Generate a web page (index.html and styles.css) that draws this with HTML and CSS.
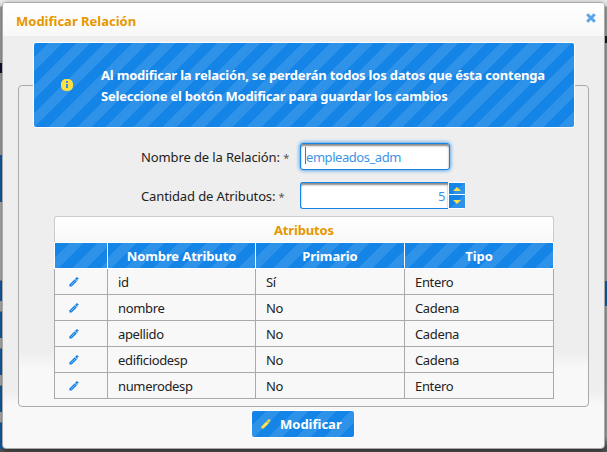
FILE: index.html
```html
<!DOCTYPE html>
<html lang="es">
<head>
<meta charset="utf-8">
<title>Modificar Relación</title>
<link rel="stylesheet" href="styles.css">
</head>
<body>
<svg class="defs" width="0" height="0"><defs>
<symbol id="pencil" viewBox="0 0 10 10"><path d="M.4 9.600V7.400L5.600 2.200L7.800 4.400L2.600 9.600z" fill="currentColor"/><path d="M2 8L6.400 3.600" stroke="#fff" stroke-opacity=".75" stroke-width=".9" stroke-dasharray=".9 .7"/><path d="M6.500 1.500L8.500 3.500M8 0v3M6.500 1.500h3" stroke="currentColor" stroke-width="1.100"/></symbol>
</defs></svg>
<div class="backdrop"><div class="strip left"><i></i><b></b><i></i><b></b><i></i><b></b><i></i><b></b><i></i><b></b><i></i></div><div class="strip right"><b></b></div></div>
<main class="dialog">
  <header class="titlebar"><h1>Modificar Relación</h1>
    <svg class="close" width="10" height="10" viewBox="0 0 10 10"><path d="M1.200 1.200L8.800 8.800M8.800 1.200L1.200 8.800" stroke="currentColor" stroke-width="3"/></svg>
  </header>
  <section class="panel">
    <div class="notice stripes">
      <svg width="12" height="12" viewBox="0 0 12 12"><rect width="12" height="12" rx="5" fill="#ffdf44"/><path d="M5 2h2v2H5zM5 5h2v4H5z" fill="#2f8fe8"/></svg>
      <div class="message"><p>Al modificar la relación, se perderán todos los datos que ésta contenga</p><p>Seleccione el botón Modificar para guardar los cambios</p></div>
    </div>
    <div class="field"><span class="label">Nombre de la Relación: <em>*</em></span><div class="input focus"><i class="caret"></i><span>empleados_adm</span></div></div>
    <div class="field second"><span class="label">Cantidad de Atributos: <em>*</em></span><div class="input number"><span>5</span></div><div class="spinner"><div class="stripes up"><i></i></div><div class="stripes down"><i></i></div></div></div>
    <div class="caption">Atributos</div>
    <div class="table">
      <div class="row head"><span class="stripes"></span><span class="stripes">Nombre Atributo</span><span class="stripes">Primario</span><span class="stripes">Tipo</span></div>
      <div class="row"><span><svg width="10" height="10"><use href="#pencil"/></svg></span><span>id</span><span>Sí</span><span>Entero</span></div>
      <div class="row"><span><svg width="10" height="10"><use href="#pencil"/></svg></span><span>nombre</span><span>No</span><span>Cadena</span></div>
      <div class="row"><span><svg width="10" height="10"><use href="#pencil"/></svg></span><span>apellido</span><span>No</span><span>Cadena</span></div>
      <div class="row"><span><svg width="10" height="10"><use href="#pencil"/></svg></span><span>edificiodesp</span><span>No</span><span>Cadena</span></div>
      <div class="row"><span><svg width="10" height="10"><use href="#pencil"/></svg></span><span>numerodesp</span><span>No</span><span>Entero</span></div>
    </div>
  </section>
  <button class="button stripes"><svg width="10" height="10"><use href="#pencil"/></svg><span>Modificar</span></button>
</main>
</body>
</html>
```
FILE: styles.css
```css
* { box-sizing: border-box; }
body { margin: 0; width: 607px; height: 452px; overflow: hidden; background: #aaa; font: 13px/20px "Noto Sans", sans-serif; color: #222; }
h1, p { margin: 0; }
.defs, .backdrop { position: absolute; }
.backdrop { inset: 0; background: linear-gradient(#eee 0 6px, #aaa 7px 437px, #555 447px); }
.strip { position: absolute; top: 0; width: 3px; height: 452px; }
.strip.left { left: 0; padding-top: 155px; background: linear-gradient(#0000 63px, #113 63px 73px, #0000 73px); }
.strip.left b { display: block; height: 11px; background: #bbb; border-bottom: 1px solid #888; }
.strip.left i { display: block; height: 26px; background: #1762ad; }
.strip.left i:first-child { height: 47px; }
.strip.left b:nth-child(2) { height: 79px; }
.strip.left i:nth-child(3) { height: 20px; }
.strip.right { right: 0; padding-top: 281px; background: linear-gradient(#0000 36px, #221a11 36px 43px, #0000 43px); }
.strip.right b { display: block; height: 25px; background: #1762ad; }
.dialog { position: relative; margin: 2px 0 0 2px; width: 603px; height: 447px; border: 1px solid #aaa; border-radius: 4px; background: linear-gradient(#eee 387px, #f8f8f8 402px); box-shadow: 0 2px 6px #0008; display: flex; flex-direction: column; }
.titlebar { height: 33px; flex: none; background: linear-gradient(#fff, #f8f8f8); display: flex; justify-content: space-between; padding: 8px 8px 0 13px; border-radius: 3px 3px 0 0; }
.titlebar h1 { color: #e69700; font-size: 13px; line-height: 20px; }
.close { color: #5aa5e7; margin-top: 2px; }
.panel { height: 322px; flex: none; margin: 49px 15px 0 15px; border: 1px solid #aaa; border-radius: 4px; background: linear-gradient(#eee 266px, #f8f8f8 282px); }
.stripes { background: repeating-linear-gradient(135deg, #1484e6 0 10px, #2f92e9 10px 20px); color: #fff; font-weight: bold; }
.notice { width: 542px; height: 86px; margin: -44px 0 0 14px; border: 1px solid #fff; border-radius: 3px; display: flex; align-items: center; padding-left: 27px; }
.message { margin-left: 28px; padding-top: 2px; line-height: 21px; white-space: nowrap; letter-spacing: -.2px; }
.field { display: flex; height: 27px; margin: 15px 0 0 122px; align-items: center; }
.field.second { margin-top: 12px; }
.label { width: 159px; white-space: nowrap; letter-spacing: -.12px; padding-top: 1px; }
.label em { font-style: normal; font-size: 11px; color: #555; }
.input { width: 150px; height: 27px; background: #fff; color: #3c94ea; border: 1px solid #1484e6; border-radius: 3px; padding: 3px 4px; box-shadow: inset 0 2px 2px #888; display: flex; letter-spacing: -.45px; }
.input.focus { box-shadow: inset 0 2px 2px #888, 0 0 4px #1484e6; }
.caret { width: 1px; height: 17px; background: #1484e6; }
.input.number { width: 148px; padding-right: 3px; justify-content: flex-end; border-right: 0; border-radius: 3px 0 0 3px; }
.spinner { width: 18px; height: 27px; border: 1px solid #fff; border-radius: 0 3px 3px 0; display: grid; grid-template-rows: 11px 13px; gap: 1px; background: #fff; }
.spinner div { display: grid; place-items: center; }
.spinner i { border: 4px solid transparent; width: 0; }
.spinner .up i { border-bottom-color: #ffdf44; border-top: 0; }
.spinner .down i { border-top-color: #ffdf44; border-bottom: 0; }
.caption { margin: 7px 0 0 35px; width: 500px; height: 26px; background: linear-gradient(#fff, #f8f8f8); border: 1px solid #ccc; border-bottom: 0; border-radius: 3px 3px 0 0; color: #e69700; font-weight: bold; text-align: center; line-height: 27px; letter-spacing: -.15px; }
.table { margin-left: 35px; width: 500px; }
.row { display: grid; grid-template-columns: 53px 148px 149px 150px; grid-template-rows: 100%; height: 26px; letter-spacing: -.35px; }
.row > span { background-color: #f8f8f8; border-bottom: 1px solid #aaa; border-left: 1px solid #aaa; padding-left: 10px; line-height: 27px; }
.row > span:last-child { border-right: 1px solid #aaa; }
.row > span:first-child { padding-left: 14px; }
.row svg { display: block; margin-top: 8px; color: #1484e6; }
.row.head { height: 27px; letter-spacing: -.1px; }
.row.head > span { border-color: #fff; border-top: 1px solid #fff; text-align: center; padding: 0; line-height: 26px; }
.button { margin: 3px 0 0 248px; width: 104px; height: 28px; flex: none; border: 1px solid #fff; border-radius: 3px; display: flex; align-items: center; padding: 0 0 0 9px; font: bold 13px "Noto Sans", sans-serif; }
.button svg { color: #ffdf44; margin-right: 9px; }
```
